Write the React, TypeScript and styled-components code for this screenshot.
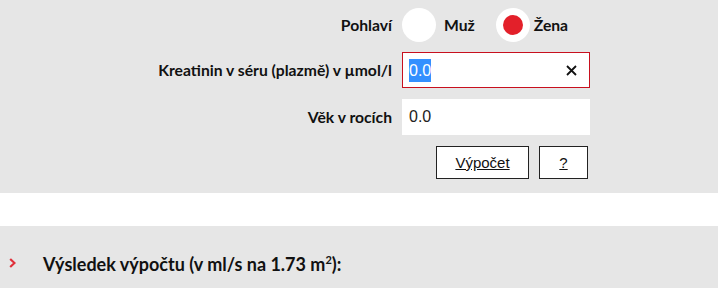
import React from "react";
import styled, { createGlobalStyle } from "styled-components";

const Global = createGlobalStyle`
  html, body { margin: 0; padding: 0; background: #ffffff; }
  body { font-family: Lato, "Open Sans", sans-serif; color: #111; }
  * { box-sizing: border-box; }
`;

const Page = styled.div`
  width: 718px;
  display: flex;
  flex-direction: column;
`;

const FormPanel = styled.section`
  background: #e6e6e6;
  padding: 8px 0 14px 0;
  display: grid;
  grid-template-columns: 392px 188px;
  column-gap: 10px;
  row-gap: 11px;
  align-items: center;
`;

const Label = styled.label`
  justify-self: end;
  font-family: Lato, sans-serif;
  font-weight: 700;
  font-size: 15.7px;
  color: #111;
`;

const RadioGroup = styled.div`
  display: flex;
  align-items: center;
  height: 34px;
  margin-bottom: -1px;
`;

const RadioOption = styled.div<{ $gap?: number; $inner: number }>`
  display: flex;
  align-items: center;
  gap: ${(p) => p.$inner}px;
  margin-right: ${(p) => p.$gap ?? 0}px;
  font-family: Lato, sans-serif;
  font-weight: 700;
  font-size: 15.7px;
`;

const RadioCircle = styled.span<{ $checked?: boolean }>`
  width: 34px;
  height: 34px;
  border-radius: 50%;
  background: #fff;
  display: flex;
  align-items: center;
  justify-content: center;
  &::after {
    content: "";
    width: 20px;
    height: 20px;
    border-radius: 50%;
    background: ${(p) => (p.$checked ? "#e3202a" : "transparent")};
  }
`;

const InputBox = styled.div<{ $focused?: boolean }>`
  height: 36px;
  background: #fff;
  border: 1px solid ${(p) => (p.$focused ? "#c8101e" : "#fff")};
  display: flex;
  align-items: center;
  padding: 0 6px 0 6px;
  font-family: "Liberation Sans", Arial, sans-serif;
  font-size: 16px;
  color: #222;
`;

const Selected = styled.span`
  background: #3390ff;
  color: #fff;
  line-height: 23px;
`;

const ClearIcon = styled.svg`
  margin-left: auto;
  margin-right: 6px;
`;

const Buttons = styled.div`
  grid-column: 2;
  display: flex;
  gap: 10px;
  justify-content: flex-end;
  padding-right: 2px;
`;

const Button = styled.button<{ $w: number }>`
  width: ${(p) => p.$w}px;
  height: 33px;
  background: #fff;
  border: 1px solid #222;
  border-radius: 0;
  font-family: "Liberation Sans", Arial, sans-serif;
  font-size: 15px;
  color: #111;
  text-decoration: underline;
  padding: 0;
`;

const Spacer = styled.div`
  height: 33px;
  background: #fff;
`;

const ResultPanel = styled.section`
  background: #e6e6e6;
  height: 62px;
  display: flex;
  align-items: center;
  padding: 14px 0 0 9px;
`;

const Chevron = styled.svg`
  margin-right: 27px;
  margin-top: -3px;
`;

const Heading = styled.h2`
  margin: 0;
  font-family: Lato, sans-serif;
  font-weight: 700;
  font-size: 18px;
  color: #111;
  sup { font-size: 11px; }
`;

export default function App() {
  return (
    <Page>
      <Global />
      <FormPanel>
        <Label>Pohlaví</Label>
        <RadioGroup>
          <RadioOption $gap={21} $inner={8}>
            <RadioCircle />
            Muž
          </RadioOption>
          <RadioOption $inner={4}>
            <RadioCircle $checked />
            Žena
          </RadioOption>
        </RadioGroup>

        <Label>Kreatinin v séru (plazmě) v µmol/l</Label>
        <InputBox $focused>
          <Selected>0.0</Selected>
          <ClearIcon width="11" height="11" viewBox="0 0 11 11">
            <path d="M1 1 L10 10 M10 1 L1 10" stroke="#111" strokeWidth="1.8" />
          </ClearIcon>
        </InputBox>

        <Label>Věk v rocích</Label>
        <InputBox>0.0</InputBox>

        <Buttons>
          <Button $w={93}>Výpočet</Button>
          <Button $w={49}>?</Button>
        </Buttons>
      </FormPanel>
      <Spacer />
      <ResultPanel>
        <Chevron width="7" height="10" viewBox="0 0 7 10">
          <path d="M1.2 1 L5.5 5 L1.2 9" fill="none" stroke="#e0303a" strokeWidth="2.2" />
        </Chevron>
        <Heading>
          Výsledek výpočtu (v ml/s na 1.73 m<sup>2</sup>):
        </Heading>
      </ResultPanel>
    </Page>
  );
}
